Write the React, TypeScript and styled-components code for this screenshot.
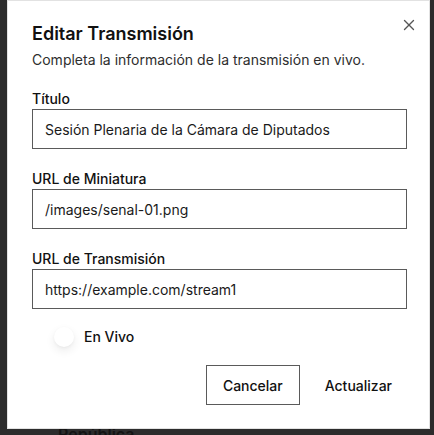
import React from "react";
import styled, { createGlobalStyle } from "styled-components";

const Global = createGlobalStyle`
  html, body { margin: 0; padding: 0; }
  body {
    background: #2c2c2c;
    font-family: Inter, "Noto Sans", sans-serif;
    color: #111;
    width: 434px;
    height: 435px;
    overflow: hidden;
  }
  * { box-sizing: border-box; }
`;

const Page = styled.div`
  height: 435px;
  padding: 424px 0 0 58px;
`;

const PageText = styled.div`
  font-size: 16px;
  font-weight: 600;
  color: #141414;
`;

const Dialog = styled.div`
  position: fixed;
  left: 7px;
  top: 0;
  width: 423px;
  background: #fff;
  border: 1px solid #e2e2e2;
  padding: 19px 22px 23px 24px;
  display: flex;
  flex-direction: column;
`;

const Close = styled.button`
  position: absolute;
  top: 15px;
  right: 11px;
  width: 18px;
  height: 18px;
  padding: 0;
  border: 0;
  background: transparent;
  color: #555;
  display: flex;
`;

const Title = styled.h2`
  margin: 0;
  font-size: 18px;
  line-height: 28px;
  font-weight: 600;
  color: #111;
`;

const Description = styled.p`
  margin: 2px 0 0;
  font-size: 14px;
  line-height: 20px;
  color: #2e2e2e;
`;

const Form = styled.div`
  margin-top: 19px;
  display: flex;
  flex-direction: column;
  gap: 20px;
`;

const Field = styled.div`
  display: flex;
  flex-direction: column;
`;

const Label = styled.label`
  font-size: 14px;
  line-height: 20px;
  font-weight: 500;
  color: #111;
`;

const Input = styled.input`
  height: 40px;
  width: 100%;
  border: 1px solid #5a5a5a;
  padding: 0 12px;
  font-family: inherit;
  font-size: 14px;
  color: #1a1a1a;
  background: #fff;
  outline: none;
`;

const SwitchRow = styled.div`
  margin-top: 16px;
  height: 24px;
  display: flex;
  align-items: center;
  gap: 8px;
`;

const Track = styled.span`
  width: 44px;
  height: 24px;
  border-radius: 12px;
  background: #fff;
  display: flex;
  align-items: center;
  justify-content: flex-end;
  padding: 2px;
`;

const Thumb = styled.span`
  width: 20px;
  height: 20px;
  border-radius: 50%;
  background: #fff;
  box-shadow: 0 4px 10px rgba(0, 0, 0, 0.08), 0 1px 3px rgba(0, 0, 0, 0.04);
`;

const SwitchLabel = styled.span`
  font-size: 14px;
  line-height: 20px;
  font-weight: 500;
  color: #111;
`;

const Footer = styled.div`
  margin-top: 16px;
  margin-right: -2px;
  display: flex;
  justify-content: flex-end;
  gap: 8px;
`;

const Button = styled.button<{ $outline?: boolean }>`
  height: 40px;
  padding: 0 16px;
  font-family: inherit;
  font-size: 14px;
  font-weight: 500;
  color: #111;
  background: #fff;
  border: 1px solid ${(p) => (p.$outline ? "#5a5a5a" : "transparent")};
`;

export default function App() {
  return (
    <>
      <Global />
      <Page>
        <PageText>República</PageText>
      </Page>
      <Dialog role="dialog">
        <Close aria-label="Cerrar">
          <svg width="18" height="18" viewBox="0 0 24 24" fill="none" stroke="currentColor" strokeWidth="1.8" strokeLinecap="round">
            <path d="M18 6 6 18" />
            <path d="m6 6 12 12" />
          </svg>
        </Close>
        <Title>Editar Transmisión</Title>
        <Description>Completa la información de la transmisión en vivo.</Description>
        <Form>
          <Field>
            <Label>Título</Label>
            <Input defaultValue="Sesión Plenaria de la Cámara de Diputados" />
          </Field>
          <Field>
            <Label>URL de Miniatura</Label>
            <Input defaultValue="/images/senal-01.png" />
          </Field>
          <Field>
            <Label>URL de Transmisión</Label>
            <Input defaultValue="https://example.com/stream1" />
          </Field>
        </Form>
        <SwitchRow>
          <Track>
            <Thumb />
          </Track>
          <SwitchLabel>En Vivo</SwitchLabel>
        </SwitchRow>
        <Footer>
          <Button $outline>Cancelar</Button>
          <Button>Actualizar</Button>
        </Footer>
      </Dialog>
    </>
  );
}
